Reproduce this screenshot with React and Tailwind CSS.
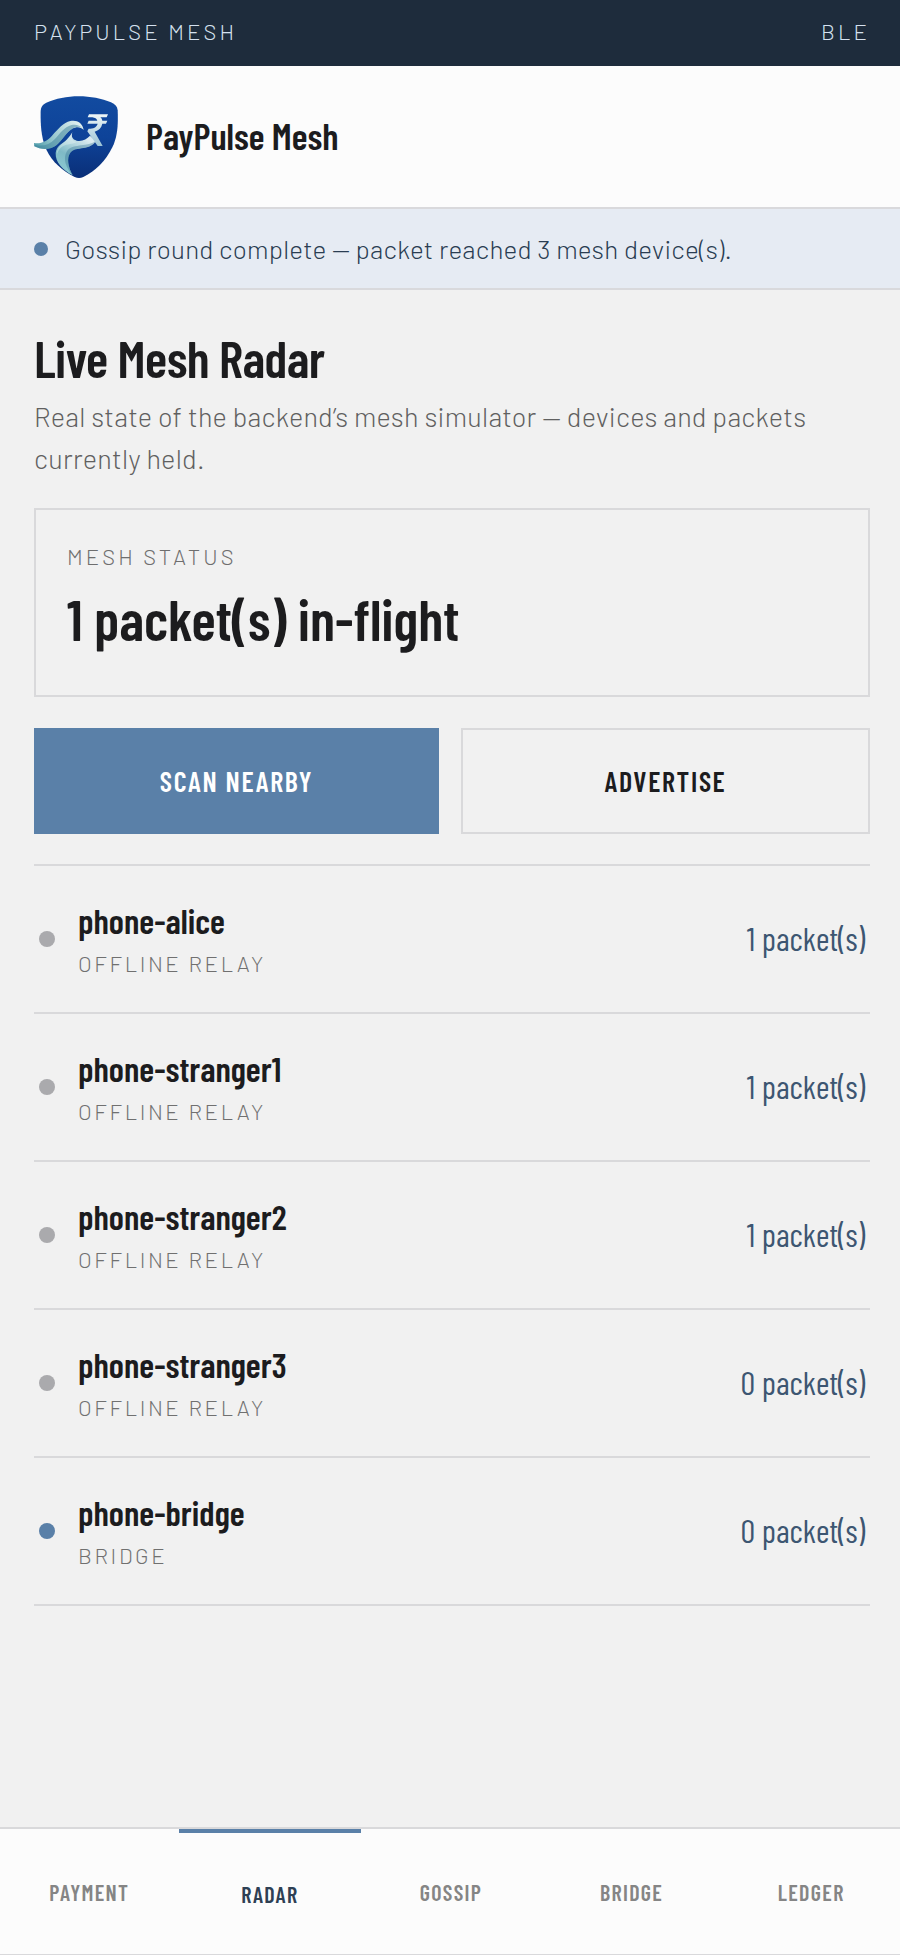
const devices = [
  { name: "phone-alice", role: "Offline relay", packets: 1 },
  { name: "phone-stranger1", role: "Offline relay", packets: 1 },
  { name: "phone-stranger2", role: "Offline relay", packets: 1 },
  { name: "phone-stranger3", role: "Offline relay", packets: 0 },
  { name: "phone-bridge", role: "Bridge", packets: 0, online: true },
];

const tabs = ["Payment", "Radar", "Gossip", "Bridge", "Ledger"];

function Logo() {
  return (
    <svg viewBox="42 33 252 246" className="h-[82px] w-[84px]" role="img" aria-label="PayPulse Mesh logo">
      <defs>
        <linearGradient id="shield" x1="0" y1="0" x2="0" y2="1">
          <stop offset="0" stopColor="#124ba0" />
          <stop offset="0.5" stopColor="#0e4399" />
          <stop offset="1" stopColor="#0a2f78" />
        </linearGradient>
        <linearGradient id="crest" gradientUnits="userSpaceOnUse" x1="42" y1="185" x2="180" y2="110">
          <stop offset="0" stopColor="#4b9aa8" />
          <stop offset="0.35" stopColor="#8fc3cb" />
          <stop offset="0.75" stopColor="#c4e0e3" />
          <stop offset="1" stopColor="#e2f1f1" />
        </linearGradient>
        <linearGradient id="stem" gradientUnits="userSpaceOnUse" x1="120" y1="260" x2="175" y2="150">
          <stop offset="0" stopColor="#8ccad2" />
          <stop offset="0.45" stopColor="#7fbac6" />
          <stop offset="1" stopColor="#dcebf0" />
        </linearGradient>
        <linearGradient id="rupee" x1="0" y1="0" x2="0" y2="1">
          <stop offset="0" stopColor="#eef6f7" />
          <stop offset="1" stopColor="#9cc4d6" />
        </linearGradient>
      </defs>
      <path
        fill="url(#shield)"
        d="M176 34C212 34 245 41 273 52C285 57 292 64 293 76C295 122 292 155 277 187C258 227 226 259 190 276C181 280 173 280 164 276C126 257 97 231 80 196C65 164 61 126 62 78C63 65 68 58 79 53C107 41 141 34 176 34Z"
      />
      <path
        fill="url(#crest)"
        d="M42 174C65 177 81 168 96 152C115 131 130 113 151 108C170 104 188 113 191 135C182 125 170 124 157 131C139 141 128 164 110 180C91 196 62 194 43 184Z"
      />
      <path
        fill="#3b7f99"
        d="M43 179C66 186 88 180 104 163C120 146 132 126 155 120C168 117 180 121 187 129C178 123 168 125 157 131C139 141 128 164 110 180C91 196 62 194 43 184Z"
        opacity="0.5"
      />
      <path
        fill="url(#stem)"
        d="M157 142C153 154 157 164 170 167C187 170 200 163 210 152L228 168C219 182 205 187 190 189C174 192 160 192 151 203C139 220 145 246 158 271C127 254 106 232 107 204C109 181 128 176 140 164C148 157 152 150 157 142Z"
      />
      <path
        fill="#2d6d90"
        d="M228 168C219 182 205 187 190 189C174 192 160 192 151 203C139 220 145 246 158 271C138 249 128 221 140 200C150 184 168 184 184 181C199 179 216 176 228 168Z"
        opacity="0.35"
      />
      <path
        fill="#eff8f8"
        d="M157 142C151 156 156 168 170 171C160 178 142 176 128 184C120 189 114 197 112 207C107 188 128 176 140 164C148 157 152 150 157 142Z"
        opacity="0.35"
      />
      <path
        fill="url(#rupee)"
        d="M207 88H264L260 97H241C245 100 246 103 247 107H262L258 116H247C244 129 236 136 224 140L248 183H233L202 139L206 131C220 131 230 127 233 116H202L206 107H232C230 101 225 98 217 97H203Z"
      />
    </svg>
  );
}

export default function App() {
  return (
    <div className="flex min-h-screen flex-col bg-[#f1f1f1] font-['Barlow',sans-serif] text-[#1c1c1e]">
      <div className="flex h-[66px] items-center justify-between bg-[#1e2c3c] pl-[34px] pr-[30px] pb-[3px] text-[22px] font-light uppercase tracking-[0.14em] text-[#d5e1ef]">
        <span>PayPulse Mesh</span>
        <span>BLE</span>
      </div>

      <header className="flex h-[143px] items-center gap-[28px] border-b-2 border-[#d9d9dc] bg-[#fcfcfc] px-[34px]">
        <Logo />
        <span className="pb-1 font-['Barlow_Condensed',sans-serif] text-[37px] leading-[48px] font-semibold">PayPulse Mesh</span>
      </header>

      <div
        role="status"
        className="flex h-[81px] items-center gap-[17px] border-b-2 border-[#d9d9dc] bg-[#e6ebf3] px-[34px] text-[26px] font-light tracking-[0.01em] text-[#2a3d52]"
      >
        <span className="size-[14px] shrink-0 rounded-full bg-[#5a80a8]" />
        <p>Gossip round complete — packet reached 3 mesh device(s).</p>
      </div>

      <main className="flex flex-col pt-[37px] pr-[30px] pb-10 pl-[34px]">
        <h1 className="font-['Barlow_Condensed',sans-serif] text-[52px] leading-[60px] font-semibold tracking-[-0.01em]">
          Live Mesh Radar
        </h1>
        <p className="mt-2 text-[27px] leading-[42px] font-light tracking-[0.01em] text-[#606060]">
          Real state of the backend’s mesh simulator — devices and packets currently held.
        </p>

        <section className="mt-[29px] flex h-[189px] flex-col border-2 border-[#d9d9db] px-[31px] pt-[30px]">
          <h2 className="text-[22px] leading-8 font-light uppercase tracking-[0.14em] text-[#6e6e6e]">Mesh status</h2>
          <p className="mt-3 font-['Barlow_Condensed',sans-serif] text-[57px] leading-[68px] font-semibold">
            1 packet(s) in-flight
          </p>
        </section>

        <div className="mt-[31px] grid grid-cols-[405fr_409fr] gap-[22px] font-['Barlow_Condensed',sans-serif] text-[28px] font-semibold">
          <button type="button" className="h-[106px] bg-[#5a80a8] uppercase tracking-[0.06em] text-white">
            Scan nearby
          </button>
          <button type="button" className="h-[106px] border-2 border-[#d9d9db] uppercase tracking-[0.06em]">
            Advertise
          </button>
        </div>

        <ul className="mt-[30px] border-t-2 border-[#d9d9db]">
          {devices.map((device) => (
            <li key={device.name} className="flex h-[148px] items-center gap-[23px] border-b-2 border-[#d9d9db] px-[5px]">
              <span
                className={
                  device.online
                    ? "size-4 shrink-0 rounded-full bg-[#5a80a8]"
                    : "size-4 shrink-0 rounded-full bg-[#aaaaad]"
                }
              />
              <div className="grow pt-1.5">
                <p className="font-['Barlow_Condensed',sans-serif] text-[35px] leading-[42px] font-semibold">{device.name}</p>
                <p className="text-[22px] leading-[44px] font-light uppercase tracking-[0.12em] text-[#707070]">{device.role}</p>
              </div>
              <span className="font-['Barlow_Condensed',sans-serif] text-[33px] text-[#3d5672]">{device.packets} packet(s)</span>
            </li>
          ))}
        </ul>
      </main>

      <nav className="mt-auto grid h-[128px] grid-cols-[179fr_183fr_180fr_182fr_178fr] border-t-2 border-b border-[#d9d9db] bg-[#fcfcfc] font-['Barlow_Condensed',sans-serif] text-[22px] font-semibold">
        {tabs.map((tab) => (
          <a
            key={tab}
            href={`#${tab.toLowerCase()}`}
            aria-current={tab === "Radar" ? "page" : undefined}
            className={
              tab === "Radar"
                ? "flex items-center justify-center border-t-4 border-[#5a80a8] pt-0.5 uppercase tracking-[0.06em] text-[#2e4054]"
                : "flex items-center justify-center pt-0.5 uppercase tracking-[0.06em] text-[#858585]"
            }
          >
            {tab}
          </a>
        ))}
      </nav>
    </div>
  );
}
